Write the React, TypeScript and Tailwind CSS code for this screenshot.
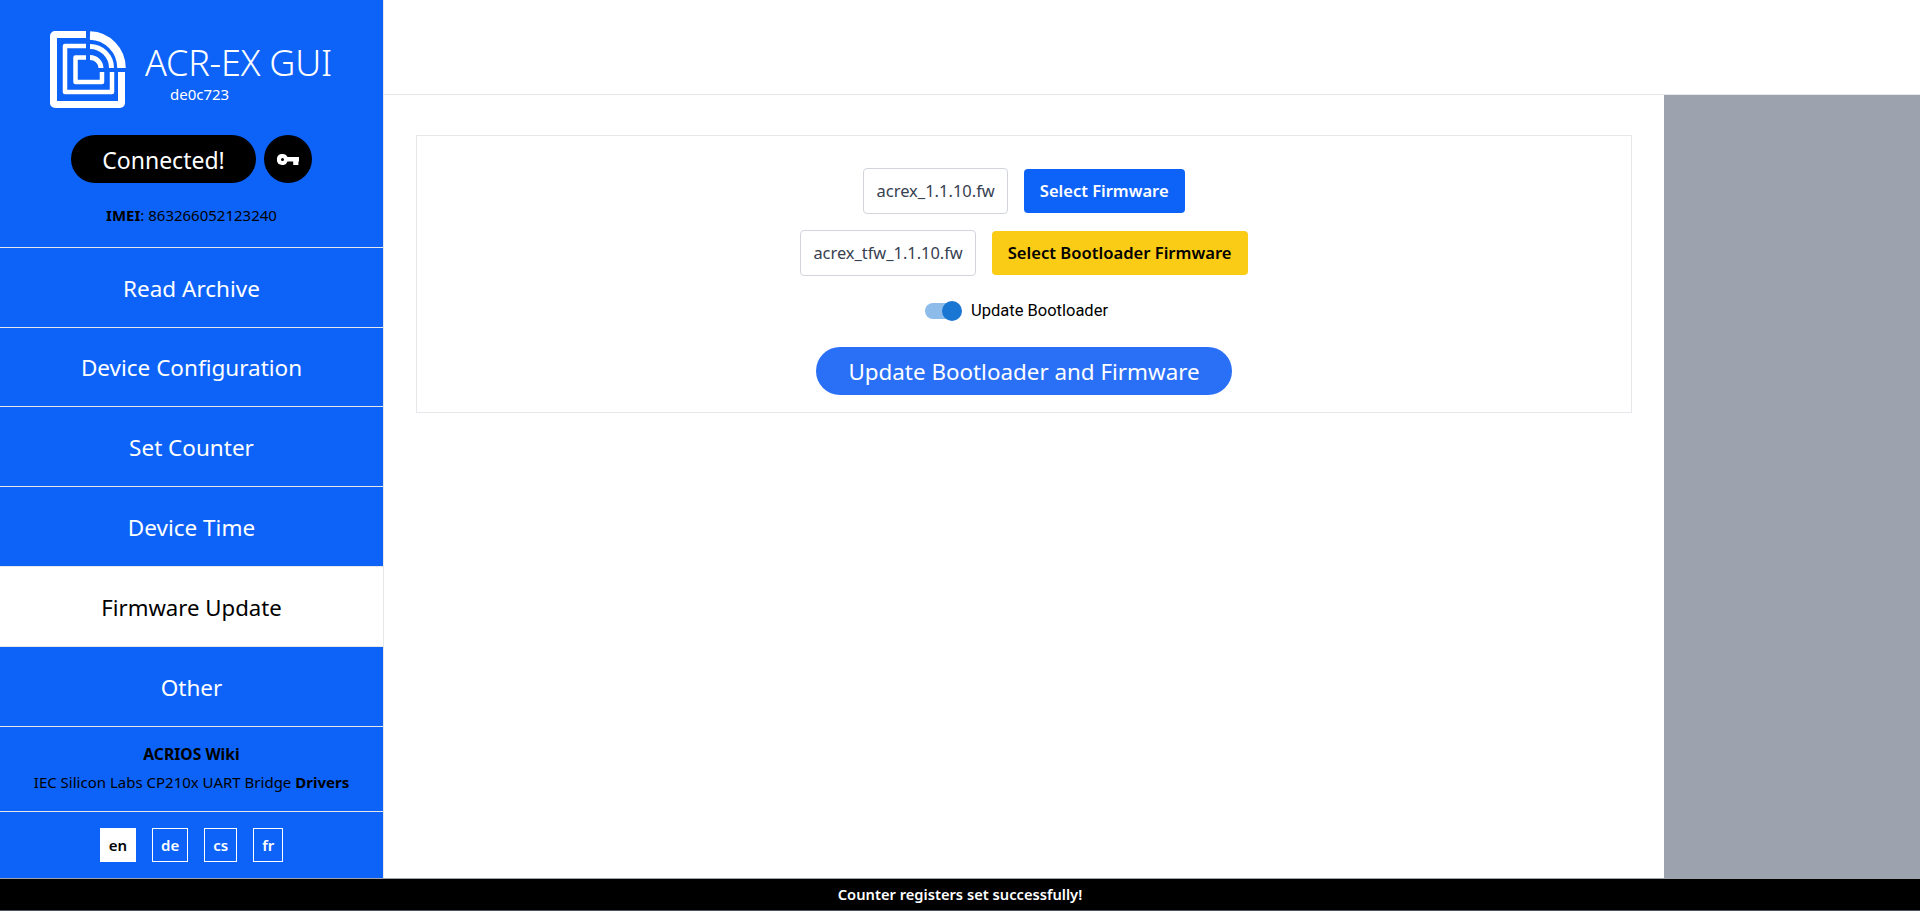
const navItems = [
  "Read Archive",
  "Device Configuration",
  "Set Counter",
  "Device Time",
  "Firmware Update",
  "Other",
];

const languages = ["en", "de", "cs", "fr"];

function Logo() {
  return (
    <svg width="76" height="77" viewBox="0 0 76 77" fill="none" className="shrink-0">
      <g stroke="#fff" strokeLinejoin="round">
        <path d="M36 3.5H5a1.5 1.5 0 0 0-1.5 1.5V72a1.5 1.5 0 0 0 1.5 1.5H70a1.5 1.5 0 0 0 1.5-1.5V41" strokeWidth="7" />
        <path d="M36 15H15V61H62V41" strokeWidth="4.5" />
        <path d="M36 26.5H25.5V51H52V41" strokeWidth="4.5" />
      </g>
      <g stroke="#fff">
        <path d="M40 4.5A32.5 32.5 0 0 1 71.5 37" strokeWidth="8.5" />
        <path d="M40 15.5A21.5 21.5 0 0 1 61.5 37" strokeWidth="5" />
        <path d="M40 26.5A11 11 0 0 1 51 37" strokeWidth="5" />
      </g>
    </svg>
  );
}

function KeyIcon() {
  return (
    <svg width="22" height="11" viewBox="0 0 22 11" fill="#fff">
      <path
        fillRule="evenodd"
        d="M5.5 0a5.5 5.5 0 0 1 5 3H22v4.4h-.6V11h-5.2V7.4h-5.7A5.5 5.5 0 1 1 5.5 0Zm0 4a1.5 1.5 0 1 0 0 3 1.5 1.5 0 0 0 0-3Z"
      />
    </svg>
  );
}

export default function App() {
  return (
    <div className="flex h-[911px] flex-col overflow-hidden bg-white font-['Noto_Sans','Open_Sans',sans-serif]">
      <div className="flex min-h-0 flex-1">
        <aside className="flex w-[384px] shrink-0 flex-col border-r border-[#e5e7eb] bg-[#0d63f8] text-white">
          <div className="flex h-[248px] shrink-0 flex-col items-center border-b border-[#e5e7eb]">
            <div className="mt-[31px] flex items-start gap-[19px] pr-[1px]">
              <Logo />
              <div className="pt-[11px]">
                <div className="text-[36px] leading-[42px] font-light tracking-[-0.2px] whitespace-nowrap">ACR-EX GUI</div>
                <div className="pl-[25px] text-[15px] leading-[20px]">de0c723</div>
              </div>
            </div>
            <div className="mt-[27px] flex items-center gap-2">
              <div className="flex h-12 w-[185px] items-center justify-center rounded-full bg-black pt-[2px] text-[23px] leading-none">
                Connected!
              </div>
              <div className="flex size-12 items-center justify-center rounded-full bg-black">
                <KeyIcon />
              </div>
            </div>
            <div className="mt-[22px] text-[15px] leading-5 text-black">
              <b>IMEI</b>: 863266052123240
            </div>
          </div>
          {navItems.map((item) => (
            <div
              key={item}
              className={
                item === "Firmware Update"
                  ? "flex h-[81px] items-center justify-center border-y border-[#e5e7eb] bg-white pt-[3px] text-[22.2px] text-black"
                  : item === "Other"
                    ? "flex h-[79px] items-center justify-center pt-[3px] text-[22.5px]"
                    : item === "Device Time"
                      ? "flex h-[79.5px] items-center justify-center pt-[3px] text-[22.5px]"
                      : "flex h-[79.5px] items-center justify-center border-b border-[#e5e7eb] pt-[3px] text-[22.5px]"
              }
            >
              {item}
            </div>
          ))}
          <div className="flex h-[86px] shrink-0 flex-col items-center justify-center gap-[5px] border-y border-[#e5e7eb] pb-[2px] text-[15px] leading-[23px] text-black">
            <b className="text-[15.7px]">ACRIOS Wiki</b>
            <div>
              IEC Silicon Labs CP210x UART Bridge <b>Drivers</b>
            </div>
          </div>
          <div className="flex flex-1 items-center justify-center gap-4">
            {languages.map((lang) => (
              <div
                key={lang}
                className={
                  lang === "en"
                    ? "flex h-[34px] items-center border border-white bg-white px-[8px] text-[15px] font-semibold text-black"
                    : "flex h-[34px] items-center border border-white px-[8px] text-[15px] font-semibold"
                }
              >
                {lang}
              </div>
            ))}
          </div>
        </aside>
        <div className="flex min-w-0 flex-1 flex-col">
          <header className="h-[95px] shrink-0 border-b border-[#e5e7eb]" />
          <div className="flex min-h-0 flex-1">
            <main className="min-w-0 flex-1 px-8 pt-10">
              <div className="flex h-[278px] flex-col items-center border border-[#e5e7eb] pt-[32px]">
                <div className="flex items-center gap-4">
                  <div className="flex h-[46px] items-center rounded border border-[#d1d5db] px-3 text-[16.5px] text-[#374151]">
                    acrex_1.1.10.fw
                  </div>
                  <div className="flex h-11 items-center rounded bg-[#0d63f8] px-4 text-[16.5px] font-semibold text-white">
                    Select Firmware
                  </div>
                </div>
                <div className="mt-4 flex items-center gap-4">
                  <div className="flex h-[46px] items-center rounded border border-[#d1d5db] px-3 text-[16.4px] text-[#374151]">
                    acrex_tfw_1.1.10.fw
                  </div>
                  <div className="flex h-11 items-center rounded bg-[#facc15] px-4 text-[16.6px] font-semibold text-black">
                    Select Bootloader Firmware
                  </div>
                </div>
                <div className="mt-[23px] flex h-6 items-center gap-[12px] pr-[15px] font-['Roboto',sans-serif] text-[16.5px] text-black">
                  <div className="relative h-[16px] w-[34px] rounded-full bg-[#8dbbea]">
                    <div className="absolute top-[-2px] right-[-3px] size-5 rounded-full bg-[#1976d2]" />
                  </div>
                  Update Bootloader
                </div>
                <div className="mt-[24px] flex h-12 w-[416px] items-center justify-center rounded-full bg-[#2a70f7] pt-[2px] text-[22.4px] text-white">
                  Update Bootloader and Firmware
                </div>
              </div>
            </main>
            <aside className="w-[256px] shrink-0 bg-[#9ca3af]" />
          </div>
        </div>
      </div>
      <footer className="flex h-[33px] shrink-0 items-center justify-center border-t border-b border-t-[#9ca3af] border-b-[#4b5563] bg-black text-[14.7px] font-semibold text-white">
        Counter registers set successfully!
      </footer>
    </div>
  );
}
